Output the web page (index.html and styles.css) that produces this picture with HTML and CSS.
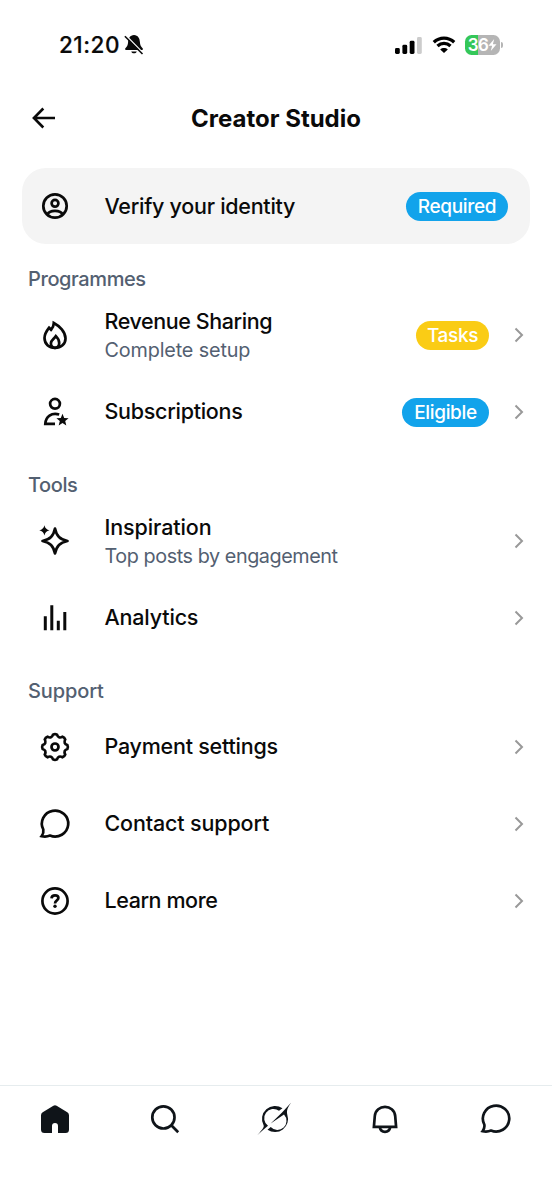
FILE: index.html
```html
<!DOCTYPE html>
<html lang="en">
<head>
<meta charset="utf-8">
<title>Creator Studio</title>
<link rel="stylesheet" href="styles.css">
</head>
<body>
<svg class="defs" width="0" height="0">
  <symbol id="chevron" viewBox="0 0 10 16"><path d="M1.500 1.500 8 8l-6.500 6.500"/></symbol>
  <symbol id="bubble" viewBox="-18 -18 36 36"><path d="M-11.700 5.500A13.200 13 0 1 1-5 11.600C-8 12.800-11 12.700-13.400 12.200C-11.800 10-11.200 8-11.700 5.500Z"/></symbol>
</svg>
<div class="screen">
  <div class="status">
    <div class="clock"><span class="time">21:20</span>
      <svg class="muted" viewBox="0 0 20 21"><path d="M10 1C6 1.200 4.300 4.300 4.100 8C4 11.200 3 12.600 1.400 14.300C.8 15.100 1.100 16 2.100 16H18C19 16 19.200 15.100 18.600 14.300C17 12.600 16 11.200 15.900 8C15.700 4.300 14 1.200 10 1ZM7.200 17.400C8 19.900 12 19.900 12.800 17.400Z"/><path class="gap" d="M1.500 1 19.500 19.500"/><path class="slash" d="M.9 2.200 18.500 20"/></svg>
    </div>
    <div class="signals">
      <svg class="cell" viewBox="0 0 28 18"><rect x="0" y="12" width="4.800" height="6" rx="1.400"/><rect x="7.400" y="8.800" width="4.800" height="9.200" rx="1.400"/><rect x="14.700" y="4.800" width="4.800" height="13.200" rx="1.400"/><rect class="off" x="22" y="1" width="4.800" height="17" rx="1.400"/></svg>
      <svg class="wifi" viewBox="0 0 24 18"><path d="M1.800 6.300C7.600.8 16.400.8 22.200 6.300M5.500 10C9.200 6.500 14.800 6.500 18.500 10"/><path class="dot" d="M8.200 13.400C10.300 11.500 13.700 11.500 15.800 13.400L12 17.100Z"/></svg>
      <div class="battery"><div class="level"><span>36</span><svg class="bolt" viewBox="0 0 9 12"><path d="M6.200 0 .5 6.700H4.100L2.800 12 8.500 5.200H4.900Z"/></svg></div><i class="nub"></i></div>
    </div>
  </div>
  <header class="header">
    <svg class="back" viewBox="0 0 24 22"><path d="M23 11H2M11.300 1.500 1.900 11 11.300 20.500"/></svg>
    <h1 class="title">Creator Studio</h1>
  </header>
  <main class="content">
    <div class="row card">
      <svg class="icon" viewBox="-18 -18 36 36"><circle r="11.700"/><circle cy="-2.700" r="3.400"/><path d="M-7.800 8.700C-5.500 3.700 5.500 3.700 7.800 8.700"/></svg>
      <div class="label"><span class="name verify">Verify your identity</span></div>
      <span class="pill required">Required</span>
    </div>
    <h2 class="section programmes">Programmes</h2>
    <div class="row">
      <svg class="icon" viewBox="-18 -18 36 36"><path class="miter" d="M-1.200-12C4.500-9 10.500-3 10.500 3.500C10.500 9 6 12.900 0 12.900S-10.500 9-10.500 3C-10.500-1.500-8-4.600-5.900-7.300L-3.900-5.200C-2.200-7-1.300-9.200-1.200-12Z"/><path class="miter" d="M.9 1.100C2.800 3 4.200 5.500 4.200 8C4.200 11 2.500 12.800 0 12.800S-4.100 11-4.100 8.300C-4.100 5.300-1.200 4.300.9 1.100Z"/></svg>
      <div class="label"><span class="name revenue">Revenue Sharing</span><span class="note setup">Complete setup</span></div>
      <span class="pill tasks">Tasks</span><svg class="chevron"><use href="#chevron"/></svg>
    </div>
    <div class="row">
      <svg class="icon" viewBox="-18 -18 36 36"><circle cy="-8.200" r="4.900"/><path d="M4.200 2.500C-3.500.3-9.300 4.500-9.700 11.800H0"/><path class="solid" d="M7.500 1.800 9.200 6 13.600 6.300 10.200 9.100 11.300 13.400 7.500 11 3.700 13.400 4.800 9.100 1.400 6.300 5.800 6Z"/></svg>
      <div class="label"><span class="name subs">Subscriptions</span></div>
      <span class="pill eligible">Eligible</span><svg class="chevron"><use href="#chevron"/></svg>
    </div>
    <h2 class="section tools">Tools</h2>
    <div class="row">
      <svg class="icon" viewBox="-18 -18 36 36"><path class="round" d="M0-12.500C1.600-4.800 4.800-1.600 12.500 0C4.800 1.600 1.600 4.800 0 12.500C-1.600 4.800-4.800 1.600-12.500 0C-4.800-1.600-1.600-4.800 0-12.500Z"/><path class="solid" d="M-10.600-15.800Q-9.700-11.600-5.500-10.700Q-9.700-9.800-10.600-5.600Q-11.500-9.800-15.700-10.700Q-11.500-11.600-10.600-15.800Z"/></svg>
      <div class="label"><span class="name inspiration">Inspiration</span><span class="note top">Top posts by engagement</span></div>
      <svg class="chevron"><use href="#chevron"/></svg>
    </div>
    <div class="row">
      <svg class="icon" viewBox="-18 -18 36 36"><path class="bars" d="M-9.700-1.700V12.300M-3.200-12.700V12.300M3.300 2.700V12.300M9.800-6V12.300"/></svg>
      <div class="label"><span class="name analytics">Analytics</span></div>
      <svg class="chevron"><use href="#chevron"/></svg>
    </div>
    <h2 class="section support">Support</h2>
    <div class="row">
      <svg class="icon" viewBox="-18 -18 36 36"><path d="M-2-12.400Q0-13.400 2-12.400Q3.370-8.130 7.500-10.200Q9.500-9.500 10.200-7.500Q8.130-3.370 12.400-2Q13.400 0 12.400 2Q8.130 3.370 10.200 7.500Q9.500 9.500 7.500 10.200Q3.370 8.130 2 12.400Q0 13.400-2 12.400Q-3.370 8.130-7.500 10.200Q-9.500 9.500-10.200 7.500Q-8.130 3.370-12.400 2Q-13.400 0-12.400-2Q-8.130-3.370-10.200-7.500Q-9.500-9.500-7.500-10.200Q-3.370-8.130-2-12.400Z"/><circle r="3.500"/></svg>
      <div class="label"><span class="name payment">Payment settings</span></div>
      <svg class="chevron"><use href="#chevron"/></svg>
    </div>
    <div class="row">
      <svg class="icon"><use href="#bubble"/></svg>
      <div class="label"><span class="name contact">Contact support</span></div>
      <svg class="chevron"><use href="#chevron"/></svg>
    </div>
    <div class="row">
      <svg class="icon" viewBox="-18 -18 36 36"><circle r="12.600"/><path d="M-3.500-2.700C-3.300-4.700-2-5.700 0-5.700C2.100-5.700 3.400-4.600 3.400-2.900C3.400-.5 0-.7 0 2.400"/><circle class="solid" cy="5.300" r="1.700"/></svg>
      <div class="label"><span class="name learn">Learn more</span></div>
      <svg class="chevron"><use href="#chevron"/></svg>
    </div>
  </main>
  <nav class="nav">
    <svg class="icon" viewBox="-18 -18 36 36"><path class="solid" d="M-1.600-13.300Q0-14.200 1.600-13.300L12.300-6.700Q14-5.600 14-3.700V10.500Q14 14 10.500 14H3V7A3 3 0 0 0-3 7V14H-10.500Q-14 14-14 10.500V-3.700Q-14-5.600-12.300-6.700Z"/></svg>
    <svg class="icon" viewBox="-18 -18 36 36"><circle cx="-1.600" cy="-1.600" r="11.100"/><path d="M6.300 6.300 13.200 13.200"/></svg>
    <svg class="icon" viewBox="-18 -18 36 36"><path class="solid" d="M7.500-10.700A13 13 0 0 0-11.400 6.200C-10.800 8-12 9.700-17.500 16C-14 12.800-10.500 10-7 6.800A9 9 0 0 1 4-8.200Z"/><path class="solid" d="M16-16.200C12.800-11.500 11.300-8.800 12.300-4.200A13 13 0 0 1-7.500 10.700L-4.300 8.100A9.100 9.100 0 0 0 9-4.400L-4.300 4.500L6.800-6.300Z"/></svg>
    <svg class="icon" viewBox="-18 -18 36 36"><path class="miter" d="M-11.100 7.800-10.200-3C-9.600-9-5-12.100 0-12.100S9.600-9 10.200-3L11.100 7.800Z"/><path d="M-5.200 8.300C-4.700 11.200-2.700 12.800 0 12.800S4.700 11.200 5.200 8.300"/></svg>
    <svg class="icon"><use href="#bubble"/></svg>
  </nav>
</div>
</body>
</html>
```
FILE: styles.css
```css
* { box-sizing: border-box; }
body { margin: 0; background: #fff; color: #0a0a0a; font-family: Inter, "Liberation Sans", sans-serif; }
svg { display: block; flex: none; overflow: visible; }
.defs { position: absolute; }
.screen { display: flex; flex-direction: column; width: 552px; height: 1200px; overflow: hidden; }
.status { display: flex; justify-content: space-between; align-items: center; height: 90px; padding: 0 49px 0 59px; }
.clock { display: flex; align-items: center; gap: 4px; padding-bottom: 1px; }
.time { font-size: 22.500px; font-weight: 500; letter-spacing: 0.500px; -webkit-text-stroke: 0.200px; }
.muted { width: 20px; height: 21px; fill: #0a0a0a; }
.gap { stroke: #fff; stroke-width: 1.500; }
.slash { stroke: #0a0a0a; stroke-width: 1.600; }
.signals { display: flex; align-items: center; }
.cell { width: 28px; height: 18px; margin-right: 9px; }
.off { fill: #ccc; }
.wifi { width: 24px; height: 18px; margin-right: 9px; fill: none; stroke: #000; stroke-width: 3.300; }
.wifi .dot { fill: #000; stroke: none; }
.battery { display: flex; align-items: center; gap: 1px; }
.level { display: flex; align-items: center; justify-content: center; width: 35px; height: 20px; border-radius: 6.500px; background: linear-gradient(90deg, #34c759 12.500px, #b5b5b5 12.500px); color: #fff; font-size: 17px; font-weight: 600; letter-spacing: -0.600px; }
.bolt { width: 9px; height: 12px; fill: #fff; }
.nub { width: 2px; height: 6px; border-radius: 0 2px 2px 0; background: #b5b5b5; }
.header { display: grid; grid-template-columns: 24px 1fr 24px; align-items: center; height: 56px; padding: 0 32px; }
.back { width: 24px; height: 22px; fill: none; stroke: #0a0a0a; stroke-width: 2.600; }
.title { margin: 0; text-align: center; font-size: 24px; font-weight: 700; }
.content { flex: 1; padding-top: 22px; }
.row { display: flex; align-items: center; height: 77px; padding: 0 28.500px 0 37px; }
.card { height: 76px; margin: 0 22px; padding: 0 22px 0 15px; border-radius: 24px; background: #f4f4f4; }
.icon { width: 36px; height: 36px; fill: none; stroke: #0a0a0a; stroke-width: 2.700; }
.miter { stroke-linejoin: miter; }
.round { stroke-linejoin: round; }
.icon .solid { fill: #0a0a0a; stroke: none; }
.icon .bars { stroke-width: 3; }
.label { display: flex; flex-direction: column; flex: 1; gap: 1px; margin-left: 31.500px; white-space: nowrap; }
.name { font-size: 21.500px; line-height: 28px; font-weight: 500; }
.note { font-size: 19.800px; line-height: 28px; color: #536071; }
.name:not(:only-child) { padding-top: 2px; }
.name:only-child { padding-bottom: 1px; }
.verify { letter-spacing: -0.270px; }
.revenue { letter-spacing: -0.420px; }
.subs { letter-spacing: -0.280px; }
.inspiration { letter-spacing: -0.100px; }
.analytics { letter-spacing: -0.180px; }
.payment { letter-spacing: -0.240px; }
.contact { letter-spacing: -0.150px; }
.learn { letter-spacing: -0.420px; }
.setup { letter-spacing: -0.140px; }
.top { letter-spacing: -0.430px; }
.programmes { letter-spacing: -0.400px; }
.tools { letter-spacing: -0.400px; }
.support { letter-spacing: -0.120px; }
.pill { display: flex; align-items: center; justify-content: center; height: 29px; border-radius: 15px; color: #fff; background: #12a3eb; font-size: 19px; font-weight: 500; letter-spacing: -0.350px; }
.required { width: 102px; }
.tasks { width: 73px; background: #facc15; }
.eligible { width: 87px; }
.chevron { width: 10px; height: 16px; margin-left: 24.500px; fill: none; stroke: #999; stroke-width: 2; }
.row:not(.card) .pill { position: relative; top: 0.500px; }
.section { height: 52px; margin: 0; padding: 21px 28px 0; font-size: 20px; line-height: 28px; font-weight: 500; color: #536071; }
.nav { display: flex; justify-content: space-between; height: 115px; padding: 15px 38.500px 0 37px; border-top: 1px solid #e6ecee; }
.nav .icon { stroke: #0f1419; }
.nav .icon .solid { fill: #0f1419; }
```
